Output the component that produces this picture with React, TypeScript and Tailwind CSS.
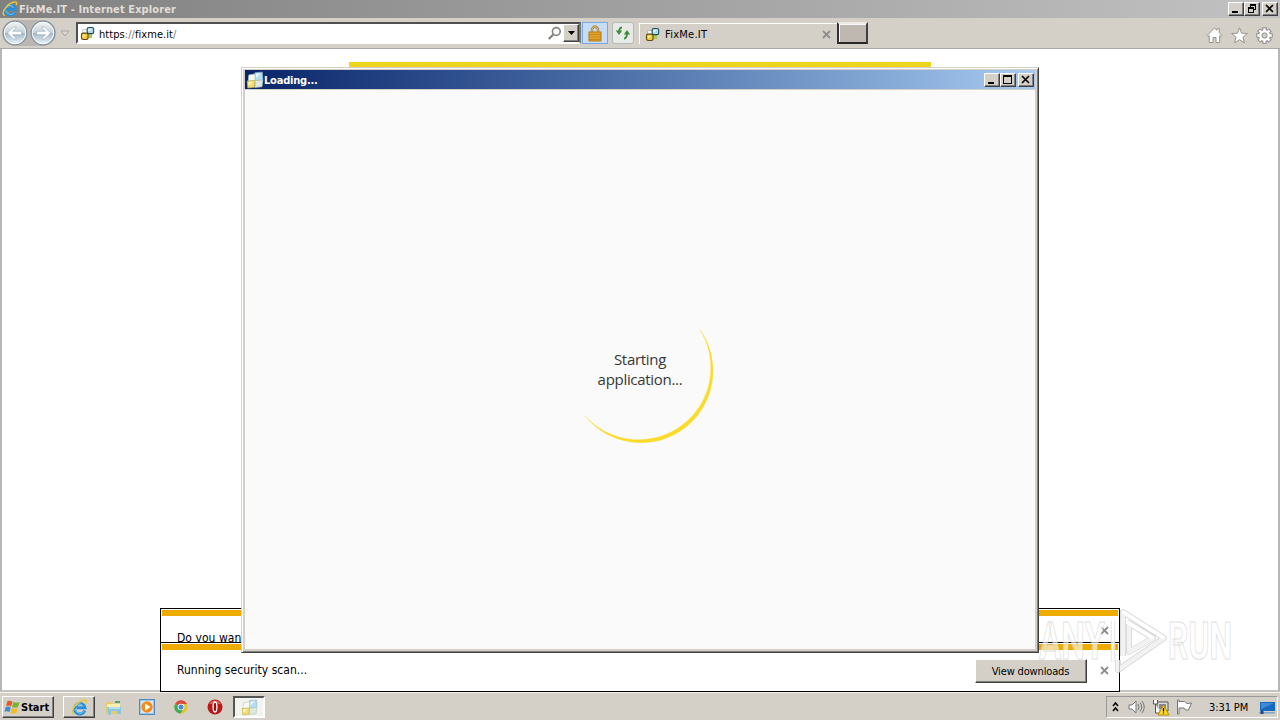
import type { ReactNode } from "react";

const raised =
  "bg-[#d4d0c8] border border-t-white border-l-white border-r-[#404040] border-b-[#404040] shadow-[inset_-1px_-1px_0_#808080]";

const CaptionButton = ({ kind }: { kind: "min" | "max" | "restore" | "close" }) => (
  <div className={`w-4 h-3.5 shrink-0 ${raised}`}>
    <svg width="14" height="12" viewBox="0 0 14 12" fill="none" stroke="#000" shapeRendering="crispEdges">
      {kind === "min" && <path d="M3 9h6" strokeWidth="2" />}
      {kind === "max" && <path d="M2.5 2.5h8v7h-8zM2 2h9" strokeWidth="1.3" />}
      {kind === "restore" && <path d="M5.5 4V1.5h5v5H8M5 2h6M3.5 4.5h5v5h-5zM3 5h6" />}
      {kind === "close" && <path d="M3 2l7 7M10 2L3 9" strokeWidth="1.7" shapeRendering="auto" />}
    </svg>
  </div>
);

const FixMeIcon = ({ size = 16, pale = false }: { size?: number; pale?: boolean }) => (
  <svg className="shrink-0" width={size} height={size} viewBox="0 0 16 16">
    {pale ? (
      <>
        <path d="M8 1.5l6.5-.5.5 7-7 .5z" fill="#b6dced" stroke="#8fb8c8" strokeWidth=".6" />
        <path d="M9 2.5l4-.5-4 4z" fill="#eefaff" />
        <path d="M8 8.5l7-.5-.8 6-6.2.6z" fill="#dce9dd" stroke="#b3c7bd" strokeWidth=".6" />
        <path d="M2.5 3.5L8 2.6v5.9l-6 .5z" fill="#fafaf0" stroke="#bbc5c5" strokeWidth=".6" />
        <path d="M1 9l7-.6-.4 6-6 .7z" fill="#f1dd70" stroke="#c3b55b" strokeWidth=".6" />
        <path d="M2 10l4-.5L2.5 13z" fill="#fff9c9" />
      </>
    ) : (
      <>
        <rect x="9" y="8" width="4" height="5" fill="#a8c963" />
        <rect x="3" y="4" width="5" height="4" fill="#fff" stroke="#999" strokeWidth=".6" />
        <rect x="7.6" y="1.6" width="7" height="6.5" rx="1.8" fill="#b4d8e4" stroke="#174f61" strokeWidth="1.2" />
        <path d="M9 3.5h3.5L9 6z" fill="#f2fbfe" />
        <rect x="1.6" y="7.6" width="7" height="6.8" rx="1.8" fill="#f5cc3b" stroke="#614a0d" strokeWidth="1.2" />
        <path d="M3 9.5h3.5L3 12z" fill="#fff5b6" />
      </>
    )}
  </svg>
);

const IeIcon = ({ size = 17 }: { size?: number }) => (
  <svg className="shrink-0" width={size} height={size} viewBox="0 0 17 17" fill="none">
    <path d="M13.8 11.5A5.3 5.3 0 1 1 14 8.7H5.5" stroke="#258fdd" strokeWidth="3" />
    <path d="M13.5 12A5.2 5.2 0 0 1 4 10" stroke="#6fc4f5" strokeWidth="1" />
    <path d="M5 7.2c1-3 6-3 7 0" stroke="#8bd3fa" strokeWidth="1" />
    <path d="M3 15.5C-2 14 4 4 12 1.3c3-1 4.5.2 3 3" stroke="#efc634" strokeWidth="1.5" />
  </svg>
);

const NavButton = ({ flip = false }: { flip?: boolean }) => (
  <svg width="26" height="26" viewBox="0 0 26 26" className={flip ? "-scale-x-100" : ""}>
    <defs>
      <linearGradient id="nav" x2="0" y2="1">
        <stop stopColor="#f5f7f8" />
        <stop offset=".48" stopColor="#c5d1d9" />
        <stop offset=".5" stopColor="#a3b5c4" />
        <stop offset="1" stopColor="#edf9ff" />
      </linearGradient>
    </defs>
    <circle cx="13" cy="13" r="11.8" fill="url(#nav)" stroke="#858f98" strokeWidth="1.2" />
    <circle cx="13" cy="13" r="10.7" fill="none" stroke="#f5fbff" />
    <path d="M5.5 13l6-6h3l-4 4.3h9v3.4h-9l4 4.3h-3z" fill="#fff" stroke="#9cabb7" strokeWidth=".6" />
  </svg>
);

const GrayX = () => (
  <svg width="9" height="9" viewBox="0 0 9 9" stroke="#8d8d8d" strokeWidth="1.8">
    <path d="M1 1l7 7M8 1L1 8" />
  </svg>
);

const TitleBar = () => (
  <div className="flex h-[18px] items-center bg-linear-to-r from-[#808080] to-[#c2c2c2] pl-0.5 pr-0.5">
    <IeIcon size={16} />
    <span className="ml-px whitespace-nowrap text-[11px] font-bold tracking-[0.1px] text-[#e0ddd7]">FixMe.IT - Internet Explorer</span>
    <div className="ml-auto flex">
      <CaptionButton kind="min" />
      <CaptionButton kind="restore" />
      <div className="w-0.5" />
      <CaptionButton kind="close" />
    </div>
  </div>
);

const Toolbar = () => (
  <div className="flex h-[31px] items-start border-b border-[#aaa9a5] bg-[#d4d0c8] pt-0.5">
    <div className="ml-0.5 flex rounded-full bg-[#b8b7b3]">
      <NavButton />
      <div className="w-0.5" />
      <NavButton flip />
    </div>
    <svg className="ml-1 mt-2.5" width="11" height="8" viewBox="0 0 11 8">
      <path d="M1 1h8L5 6z" fill="#ddd9d1" stroke="#aaa79f" />
    </svg>
    <div className="ml-[5px] mt-0.5 flex h-[22px] w-[505px] items-center border-2 border-b-white border-l-[#505050] border-r-[#777] border-t-[#505050] bg-white">
      <div className="ml-0.5"><FixMeIcon size={15} /></div>
      <span className="ml-1 mt-0.5 text-[11px] tracking-[0.06px] text-black">https<span className="text-[#777]">://</span>fixme.it<span className="text-[#777]">/</span></span>
      <svg className="ml-auto mr-px" width="15" height="15" viewBox="0 0 15 15" fill="none" stroke="#85817b" strokeWidth="1.6">
        <circle cx="9.3" cy="5.5" r="3.9" />
        <path d="M6.3 8.5l-4.5 4.5" strokeWidth="2.2" />
      </svg>
      <div className={`flex h-[18px] w-4 items-center justify-center ${raised}`}>
        <svg width="7" height="4" viewBox="0 0 7 4"><path d="M0 0h7L3.5 4z" /></svg>
      </div>
    </div>
    <div className="ml-px mt-0.5 flex h-[22px] w-[26px] items-center justify-center border border-[#79a7df] bg-[#c6dcf7]">
      <svg width="14" height="17" viewBox="0 0 14 17">
        <path d="M4 8V4q3-5 6 0v4" fill="none" stroke="#9d7b2c" strokeWidth="2.4" />
        <path d="M4 8V4q3-5 6 0v4" fill="none" stroke="#ecd592" strokeWidth=".9" />
        <rect x="1" y="7" width="12" height="9" fill="#e4a72b" stroke="#b57b13" />
        <path d="M1 9.5h12M1 12h12M1 14.5h12" stroke="#bd8218" strokeWidth=".8" />
      </svg>
    </div>
    <div className="ml-1 mt-0.5 flex h-[22px] w-[22px] items-center justify-center rounded-[3px] border border-[#b2bcb9] bg-[#e7eae7]">
      <svg width="16" height="16" viewBox="0 0 16 16" fill="none" stroke="#3b8c38" strokeWidth="1.8">
        <path d="M7 2.5Q4 2.5 4 8" /><path d="M.8 5.5h6.4L4 10z" fill="#3b8c38" stroke="none" />
        <path d="M9 13.5q3 0 3-5.5" /><path d="M8.8 9.5h6.4L12 5z" fill="#3b8c38" stroke="none" />
      </svg>
    </div>
    <div className="ml-[5px] mt-[3px] flex h-[21px] w-[198px] items-center border-l border-t border-white">
      <div className="ml-[5px]"><FixMeIcon size={15} /></div>
      <span className="ml-[5px] text-[11px] tracking-[0.25px]">FixMe.IT</span>
      <div className="ml-auto mr-1.5"><GrayX /></div>
    </div>
    <div className="mt-0.5 h-[22px] w-[31px] border-2 border-b-[#282828] border-l-[#333] border-r-[#404040] border-t-[#eeeae4] bg-[#bfb8b1] shadow-[inset_1px_1px_0_#f8f8f8]" />
    <div className="ml-auto mr-[7px] mt-[7px] flex gap-2">
      <svg width="17" height="17" viewBox="0 0 17 17" fill="#fff" stroke="#96938e">
        <path d="M1 8.5L8.5 1l2.3 2.2V1.8h2.5v3.8L16 8.5l-1 1.2-1.3-1.2v7H10v-5H7v5H3.3v-7L2 9.7z" />
      </svg>
      <svg width="17" height="17" viewBox="0 0 17 17" fill="#fff" stroke="#96938e">
        <path d="M8.5.8l2.1 5.4 5.8.3-4.5 3.7 1.5 5.6-4.9-3.1-4.9 3.1 1.5-5.6L.6 6.5l5.8-.3z" />
      </svg>
      <svg width="17" height="17" viewBox="0 0 17 17">
        <g stroke="#8e8b86" strokeWidth="4.4">
          <path d="M8.5 .3v16.4M.3 8.5h16.4M2.7 2.7l11.6 11.6M14.3 2.7L2.7 14.3" />
        </g>
        <circle cx="8.5" cy="8.5" r="6.3" fill="#8e8b86" />
        <g stroke="#fff" strokeWidth="2.4">
          <path d="M8.5 1.2v14.6M1.2 8.5h14.6M3.4 3.4l10.2 10.2M13.6 3.4L3.4 13.6" />
        </g>
        <circle cx="8.5" cy="8.5" r="5.4" fill="#fff" />
        <circle cx="8.5" cy="8.5" r="2.6" fill="#d4d0c8" stroke="#8e8b86" />
      </svg>
    </div>
  </div>
);

const LoadingWindow = () => (
  <div className="absolute left-[241px] top-[18px] flex h-[586px] w-[798px] flex-col border border-b-[#404040] border-l-[#d4d0c8] border-r-[#404040] border-t-[#d4d0c8] bg-[#d4d0c8] p-0.5 shadow-[inset_1px_1px_0_#fff,inset_-1px_-1px_0_#808080]">
    <div className="mx-px flex h-[19px] shrink-0 items-center bg-linear-to-r from-[#0a246a] to-[#a6caf0] pl-px pr-px">
      <FixMeIcon size={18} pale />
      <span className="mt-px text-[11px] font-bold tracking-[-0.2px] text-white">Loading...</span>
      <div className="ml-auto flex">
        <CaptionButton kind="min" />
        <CaptionButton kind="max" />
        <div className="w-0.5" />
        <CaptionButton kind="close" />
      </div>
    </div>
    <div className="m-px flex flex-1 items-center justify-center bg-[#fafafa]">
      <div className="relative flex h-[148px] w-[148px] items-center justify-center">
        <svg className="absolute inset-0" width="148" height="148" viewBox="0 0 148 148">
          <path d="M134 33.5A71.99 71.99 0 0 1 19 120A72.24 72.24 0 0 0 134 33.5z" fill="#fadb2b" stroke="#fadb2b" strokeWidth=".3" />
        </svg>
        <p className="-mt-0.5 text-center font-['Open_Sans',sans-serif] text-[15px] leading-5 tracking-[-0.3px] text-[#383838]">Starting<br />application...</p>
      </div>
    </div>
  </div>
);

const Watermark = () => (
  <svg className="absolute left-[1036px] top-[557px] overflow-visible" width="204" height="68" viewBox="0 0 204 68" fontFamily="Roboto, sans-serif" fontSize="51" fontWeight="700">
    <g fill="#fff" fillOpacity=".6" stroke="#c8c8c8" strokeOpacity=".6">
      <text x="3" y="53" textLength="66" lengthAdjust="spacingAndGlyphs">ANY</text>
      <text x="132" y="53" textLength="64" lengthAdjust="spacingAndGlyphs">RUN</text>
    </g>
    <g fill="none" strokeLinejoin="round" opacity=".8">
      <path d="M87 50V6L128 32L82 64V54M93 18v28L117 32L91 16" stroke="#cfcfcf" strokeWidth="6" />
      <path d="M87 50V6L128 32L82 64V54M93 18v28L117 32L91 16" stroke="#f0f0f0" strokeWidth="4.4" />
      <path d="M87 6L128 32M91 16L117 32" stroke="#fff" strokeWidth="3.4" />
      <path d="M77 15v41" stroke="#d9d9d9" strokeWidth="4.5" /><path d="M77 15v41" stroke="#fff" strokeWidth="2.8" />
    </g>
  </svg>
);

const BrowserPage = () => (
  <div className="relative h-[643px] border-b-2 border-l-2 border-r-2 border-b-[#c4c4c0] border-l-[#b5b5b5] border-r-[#b5b5b5] bg-white">
    <div className="ml-[347px] h-[18px] w-[582px] pt-[13px]"><div className="h-[5px] bg-[#edd51d]" /></div>
    <div className="absolute left-[158px] top-[559px] w-[960px] border border-black bg-white text-[12px]">
      <div className="h-[33px] overflow-hidden p-px">
        <div className="h-1.5 bg-[#efac00]" />
        <div className="flex justify-between pl-[15px] pr-[9px]">
          <span className="pt-4 text-[12px] tracking-[0.05px]">Do you want to run or save this file?</span>
          <div className="pt-2.5"><GrayX /></div>
        </div>
      </div>
      <div className="h-[49px] border-t border-black p-px">
        <div className="h-1.5 bg-[#efac00]" />
        <div className="flex h-[41px] items-center pl-[15px] pr-[9px]">
          <span className="-mt-0.5 tracking-[0.03px]">Running security scan...</span>
          <div className="ml-auto mr-[13px] flex h-6 w-[112px] items-center justify-center border border-b-[#404040] border-l-white border-r-[#404040] border-t-white bg-[#d4d0c8] pr-px pt-px text-[11px] tracking-[-0.15px] shadow-[inset_-1px_-1px_0_#808080]">View downloads</div>
          <GrayX />
        </div>
      </div>
    </div>
    <div className="absolute -left-0.5 top-0"><LoadingWindow /></div>
    <div className="absolute -left-0.5 top-0"><Watermark /></div>
  </div>
);

const TaskItem = ({ children, look = "" }: { children: ReactNode; look?: string }) => (
  <div className={`flex h-[22px] w-8 items-center justify-center ${look}`}>{children}</div>
);

const Taskbar = () => (
  <div className="flex h-7 items-center border-t border-[#f4f2ee] bg-[#d4d0c8] pt-px">
    <div className={`ml-0.5 flex h-[22px] w-[52px] items-center ${raised}`}>
      <svg className="shrink-0 ml-px" width="17" height="16" viewBox="0 0 16 16">
        <path d="M3 2q3-1 5 1L6.5 7.5Q4 6 1.5 7z" fill="#e65b24" />
        <path d="M9 3q3 1.5 6 0l-1.5 5q-3 1-6 0z" fill="#78b22e" />
        <path d="M1.2 8q3-1 5 .5L5 13q-3-1.5-5 0z" fill="#3c8dd5" />
        <path d="M7.2 9q3 1.5 6 0L12 14q-3 1-6 0z" fill="#f4bb2b" />
      </svg>
      <span className="text-[11px] font-bold">Start</span>
    </div>
    <div className="ml-[9px] flex items-center">
      <TaskItem look={raised}><IeIcon /></TaskItem>
      <div className="ml-0.5"><TaskItem>
        <svg width="17" height="17" viewBox="0 0 17 17">
          <path d="M1 3h6l1 2h7v10H1z" fill="#e7cb72" /><path d="M2 5h13v5H2z" fill="#f8efae" />
          <path d="M2 8h14v7h-4v-3H6v4H3z" fill="#8bc8df" /><path d="M4 9h11" stroke="#e0f4fa" />
          <path d="M10 3h5" stroke="#59a34c" strokeWidth="2" />
        </svg>
      </TaskItem></div>
      <div className="ml-0.5"><TaskItem>
        <svg width="16" height="16" viewBox="0 0 16 16">
          <rect x=".5" y=".5" width="15" height="15" fill="#9dc5e8" stroke="#518bc0" />
          <rect x="2" y="2" width="12" height="12" fill="#d7e9f7" />
          <circle cx="8" cy="8" r="5.7" fill="#f48a19" /><path d="M6 4.5L11.5 8L6 11.5z" fill="#fff" />
        </svg>
      </TaskItem></div>
      <div className="ml-0.5"><TaskItem>
        <svg width="14" height="14" viewBox="0 0 16 16">
          <circle cx="8" cy="8" r="7.5" fill="#e2c62a" />
          <path d="M8 8L1.2 4.5A7.5 7.5 0 0 1 14.8 4.5H8z" fill="#dc4a3d" />
          <path d="M8 8L1.2 4.5A7.5 7.5 0 0 0 7.5 15.5L11 10z" fill="#3eaa5b" />
          <circle cx="8" cy="8" r="3.8" fill="#fff" /><circle cx="8" cy="8" r="2.9" fill="#4f87d8" />
        </svg>
      </TaskItem></div>
      <div className="ml-0.5"><TaskItem>
        <svg width="16" height="16" viewBox="0 0 16 16">
          <circle cx="8" cy="8" r="7.5" fill="#b91919" /><path d="M2 5a7 7 0 0 1 12 0" fill="#e05b55" />
          <ellipse cx="8" cy="8" rx="1.9" ry="5" fill="#991010" stroke="#fff" strokeWidth="1.3" />
        </svg>
      </TaskItem></div>
      <div className="ml-0.5"><TaskItem look="border-2 border-t-[#555] border-l-[#555] border-r-white border-b-white bg-[#f4f3f0]"><FixMeIcon size={17} pale /></TaskItem></div>
    </div>
    <div className="ml-auto mr-0.5 flex h-[22px] w-[172px] items-center border border-b-white border-l-[#999] border-r-white border-t-[#999] pl-1">
      <svg width="9" height="12" viewBox="0 0 9 12" fill="none" stroke="#000" strokeWidth="1.5"><path d="M2 5l2.5-3L7 5M2 10l2.5-3L7 10" /></svg>
      <svg className="ml-2" width="18" height="16" viewBox="0 0 18 16" fill="none" stroke="#777">
        <path d="M1 6h3l4-4v12L4 10H1z" fill="#fff" /><path d="M10 5q2 3 0 6M12 3.5q3.5 4.5 0 9M14 2q4.5 6 0 12" />
      </svg>
      <svg className="ml-1.5" width="18" height="18" viewBox="0 0 18 18">
        <path d="M5 4h11v9H5z" fill="#ddd" stroke="#555" /><path d="M7 6h7v5H7z" fill="#888" />
        <path d="M1.5 2v4h4V2M3.5 6v9h5" fill="#fff" stroke="#555" />
        <path d="M11.5 7l5.5 10H6z" fill="#ffdc26" stroke="#bc8a09" /><path d="M11.5 10v3.5M11.5 14.5v1" stroke="#000" strokeWidth="1.3" />
      </svg>
      <svg className="ml-1.5" width="17" height="16" viewBox="0 0 17 16" fill="#fff" stroke="#777">
        <path d="M1.5 1v14h1.5V9h5l1.5 2h3L15.5 4 11 4.5 8.5 2.5H3V1z" />
      </svg>
      <span className="ml-4 mt-px whitespace-nowrap text-[11px] tracking-[-0.1px]">3:31 PM</span>
      <svg className="ml-auto mr-0.5" width="16" height="15" viewBox="0 0 16 15">
        <path d="M1 2h15v9H1z" fill="#1769bf" /><path d="M2 3h13L2 9z" fill="#3f8bd6" />
        <path d="M0 12h16v1.5H0z" fill="#81a5c6" /><path d="M3 11v3" stroke="#234a79" strokeWidth="3" />
      </svg>
    </div>
  </div>
);

export default function App() {
  return (
    <div className="flex h-[720px] w-[1280px] flex-col overflow-hidden bg-[#d4d0c8] font-['DejaVu_Sans_Condensed','DejaVu_Sans',sans-serif] leading-none text-black">
      <TitleBar />
      <Toolbar />
      <BrowserPage />
      <Taskbar />
    </div>
  );
}
